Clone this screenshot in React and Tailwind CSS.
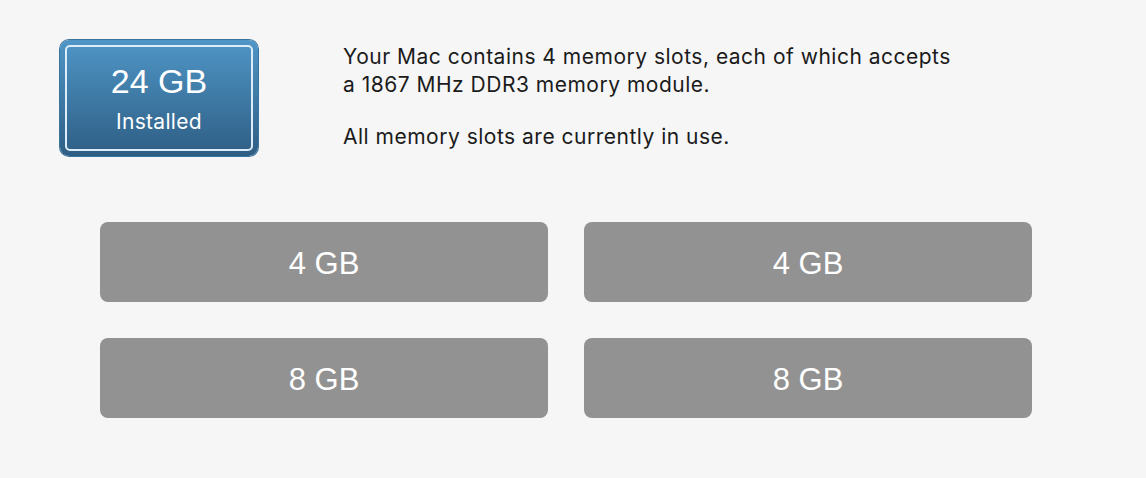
function Slot({ size }) {
  return (
    <div className="h-20 rounded-lg bg-[#929292] flex items-center justify-center">
      <span className="text-[31px] text-white leading-none mt-[2px]">{size}</span>
    </div>
  );
}

export default function App() {
  const slots = ["4 GB", "4 GB", "8 GB", "8 GB"];

  return (
    <div
      className="w-[1146px] h-[478px] bg-[#f6f6f6] pt-10 pl-[60px]"
      style={{ fontFamily: '"Liberation Sans", Arial, sans-serif' }}
    >
      <div className="flex items-start">
        <div className="w-[198px] h-[116px] rounded-[9px] p-[5px] bg-gradient-to-b from-[#4f96c6] to-[#2e5e85] shadow-[0_0_0_1px_#3a74a0]">
          <div className="h-full rounded-[5px] border-2 border-[#dcedf9] flex flex-col items-center justify-center">
            <div className="text-[34px] text-white leading-none">24 GB</div>
            <div className="font-['Inter'] text-[21px] tracking-[0.3px] text-white leading-none mt-[13px]">Installed</div>
          </div>
        </div>

        <div className="ml-[85px] mt-[3px] font-['Inter'] text-[21px] tracking-[0.5px] leading-[28px] text-[#1b1b1b]">
          <p>Your Mac contains 4 memory slots, each of which accepts</p>
          <p>a 1867 MHz DDR3 memory module.</p>
          <p className="mt-[24px]">All memory slots are currently in use.</p>
        </div>
      </div>

      <div className="ml-10 mt-[66px] w-[932px] grid grid-cols-2 gap-9">
        {slots.map((s, i) => (
          <Slot key={i} size={s} />
        ))}
      </div>
    </div>
  );
}
